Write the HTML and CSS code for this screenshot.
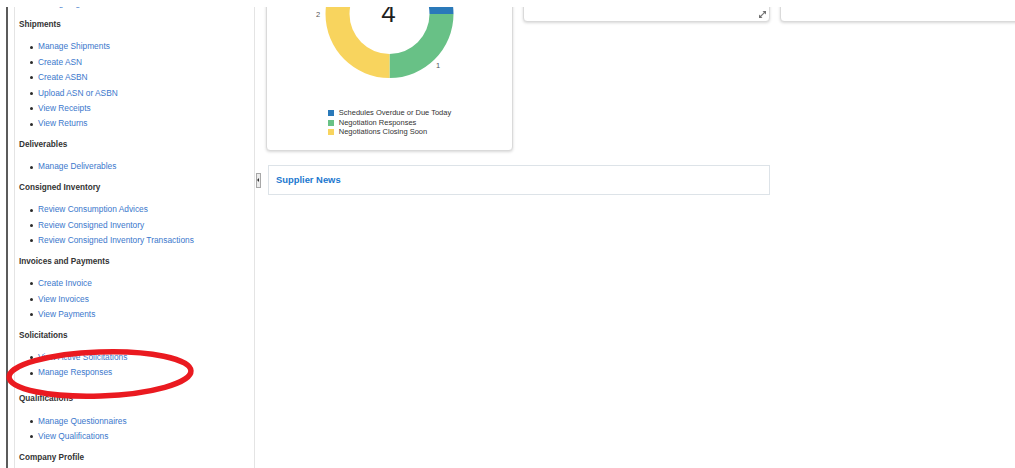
FILE: index.html
```html
<!DOCTYPE html>
<html lang="en">
<head>
<meta charset="utf-8">
<title>Supplier Portal</title>
<link rel="stylesheet" href="styles.css">
</head>
<body>
<div class="viewport">
  <div class="page">
    <aside class="sidebar">
      <section class="nav-group">
        <ul class="nav-list">
          <li><a href="#">Manage Agreements</a></li>
        </ul>
      </section>
      <section class="nav-group">
        <h3 class="nav-title">Shipments</h3>
        <ul class="nav-list">
          <li><a href="#">Manage Shipments</a></li>
          <li><a href="#">Create ASN</a></li>
          <li><a href="#">Create ASBN</a></li>
          <li><a href="#">Upload ASN or ASBN</a></li>
          <li><a href="#">View Receipts</a></li>
          <li><a href="#">View Returns</a></li>
        </ul>
      </section>
      <section class="nav-group">
        <h3 class="nav-title">Deliverables</h3>
        <ul class="nav-list">
          <li><a href="#">Manage Deliverables</a></li>
        </ul>
      </section>
      <section class="nav-group">
        <h3 class="nav-title">Consigned Inventory</h3>
        <ul class="nav-list">
          <li><a href="#">Review Consumption Advices</a></li>
          <li><a href="#">Review Consigned Inventory</a></li>
          <li><a href="#">Review Consigned Inventory Transactions</a></li>
        </ul>
      </section>
      <section class="nav-group">
        <h3 class="nav-title">Invoices and Payments</h3>
        <ul class="nav-list">
          <li><a href="#">Create Invoice</a></li>
          <li><a href="#">View Invoices</a></li>
          <li><a href="#">View Payments</a></li>
        </ul>
      </section>
      <section class="nav-group">
        <h3 class="nav-title">Solicitations</h3>
        <ul class="nav-list nav-list--spaced">
          <li><a href="#">View Active Solicitations</a></li>
          <li><a href="#">Manage Responses</a></li>
        </ul>
      </section>
      <section class="nav-group">
        <h3 class="nav-title">Qualifications</h3>
        <ul class="nav-list">
          <li><a href="#">Manage Questionnaires</a></li>
          <li><a href="#">View Qualifications</a></li>
        </ul>
      </section>
      <section class="nav-group">
        <h3 class="nav-title">Company Profile</h3>
      </section>
    </aside>

    <main class="main">
      <div class="tiles">
        <div class="tile tile--chart">
          <svg class="donut" viewBox="0 0 245 128" width="245" height="128">
            <path fill="#2a79b9" d="M122.5 0 A64 64 0 0 1 186.5 64 L162.5 64 A40 40 0 0 0 122.5 24 Z"/>
            <path fill="#68c186" d="M186.5 64 A64 64 0 0 1 122.5 128 L122.5 104 A40 40 0 0 0 162.5 64 Z"/>
            <path fill="#f8d45e" d="M122.5 128 A64 64 0 0 1 58.5 64 A64 64 0 0 1 122.5 0 L122.5 24 A40 40 0 0 0 82.5 64 A40 40 0 0 0 122.5 104 Z"/>
            <text class="donut-total" x="121.5" y="71.7" text-anchor="middle">4</text>
            <text class="donut-label" x="51" y="66.7" text-anchor="middle">2</text>
            <text class="donut-label" x="171" y="117.7" text-anchor="middle">1</text>
          </svg>
          <ul class="legend">
            <li><span class="swatch swatch--blue"></span>Schedules Overdue or Due Today</li>
            <li><span class="swatch swatch--green"></span>Negotiation Responses</li>
            <li><span class="swatch swatch--yellow"></span>Negotiations Closing Soon</li>
          </ul>
        </div>
        <div class="tile tile--short">
          <svg class="resize-icon" viewBox="0 0 9 9" width="9" height="9">
            <path d="M2 7 L7 2" stroke="#7a7a7a" stroke-width="1.2"/>
            <path d="M4.5 1 H8 V4.5 Z" fill="#6f6f6f"/>
            <path d="M1 4.5 V8 H4.5 Z" fill="#6f6f6f"/>
          </svg>
        </div>
        <div class="tile tile--short"></div>
      </div>

      <div class="news-row">
        <button class="splitter" type="button" aria-label="Collapse"></button>
        <div class="news"><a href="#">Supplier News</a></div>
      </div>
    </main>
  </div>
</div>

<svg class="highlight-ring" viewBox="0 0 196 60" width="196" height="60">
  <ellipse cx="96" cy="30" rx="91" ry="22" fill="none" stroke="#ea1a20" stroke-width="5.5" transform="rotate(-2 96 30)"/>
</svg>
</body>
</html>
```

FILE: styles.css
```css
html,
body {
  margin: 0;
  background: #fff;
}

body {
  position: relative;
  height: 468px;
  overflow: hidden;
  font-family: "Liberation Sans", Arial, sans-serif;
  color: #333;
}

/* scrolled page area with the dark frame edge on the left */
.viewport {
  margin: 7px 0 0 6px;
  height: 461px;
  overflow: hidden;
  border-left: 2px solid #5b5b5b;
}

.page {
  display: flex;
  align-items: stretch;
  margin-top: -70px;
  padding-left: 6px;
  min-height: 620px;
}

/* ---------- navigation sidebar ---------- */
.sidebar {
  flex: none;
  width: 241px;
  box-sizing: border-box;
  border-left: 1px solid #e4e4e4;
  border-right: 1px solid #e4e4e4;
  padding: 51px 4px 20px;
}

.nav-title {
  margin: 0 0 -2px;
  font-size: 8.2px;
  line-height: 16px;
  font-weight: bold;
  color: #333;
}

.nav-list {
  margin: 8.3px 0 5.3px;
  padding-left: 11px;
  list-style: none;
  font-size: 8.35px;
  line-height: 15.4px;
  color: #222;
}

.nav-list li {
  display: flex;
  align-items: center;
}

.nav-list li::before {
  content: "";
  flex: none;
  width: 3px;
  height: 3px;
  margin-right: 5px;
  border-radius: 50%;
  background: #2a2a2a;
}

.nav-list--spaced {
  margin-bottom: 10.6px;
}

.nav-list a {
  color: #3b78cc;
  text-decoration: none;
}

/* ---------- main content ---------- */
.main {
  flex: 1;
  min-width: 0;
  overflow: hidden;
}

.tiles {
  display: flex;
  align-items: flex-start;
  gap: 10px;
  padding: 3px 0 0 11px;
}

.tile {
  position: relative;
  flex: none;
  width: 247px;
  box-sizing: border-box;
  border: 1px solid #dadada;
  border-radius: 4px;
  background: #fff;
  box-shadow: 0 1px 3px rgba(0, 0, 0, 0.16);
}

.tile--chart {
  padding-top: 9px;
}

.tile--short {
  height: 82px;
}

.donut {
  display: block;
}

.donut-total {
  font-family: "Liberation Sans", Arial, sans-serif;
  font-size: 26px;
  fill: #1e1e1e;
}

.donut-label {
  font-family: "Liberation Sans", Arial, sans-serif;
  font-size: 7.5px;
  fill: #555;
}

.legend {
  width: fit-content;
  margin: 30px auto 0;
  padding: 0 0 13.1px;
  list-style: none;
  font-size: 7.5px;
  line-height: 9.7px;
  color: #333;
}

.legend li {
  display: flex;
  align-items: center;
  gap: 5px;
}

.swatch {
  width: 6px;
  height: 6px;
}

.swatch--blue {
  background: #2a79b9;
}

.swatch--green {
  background: #68c186;
}

.swatch--yellow {
  background: #f8d45e;
}

.resize-icon {
  position: absolute;
  right: 2px;
  bottom: 2px;
}

/* ---------- supplier news ---------- */
.news-row {
  display: flex;
  align-items: center;
  gap: 7px;
  margin-top: 14px;
  padding-left: 1px;
}

.splitter {
  position: relative;
  flex: none;
  width: 5px;
  height: 15px;
  padding: 0;
  box-sizing: border-box;
  border: 1px solid #a8a8a8;
  background: #ececec;
}

.splitter::before {
  content: "";
  position: absolute;
  left: 0;
  top: 4.5px;
  border-top: 2px solid transparent;
  border-bottom: 2px solid transparent;
  border-right: 2px solid #333;
}

.news {
  display: flex;
  align-items: center;
  width: 502px;
  height: 30px;
  box-sizing: border-box;
  padding: 0 0 2px 7px;
  border: 1px solid #dde3e8;
}

.news a {
  font-size: 9.4px;
  font-weight: bold;
  color: #1b78cf;
  text-decoration: none;
}

/* red annotation ring drawn over the sidebar */
.highlight-ring {
  position: absolute;
  left: 4px;
  top: 344px;
}
```
